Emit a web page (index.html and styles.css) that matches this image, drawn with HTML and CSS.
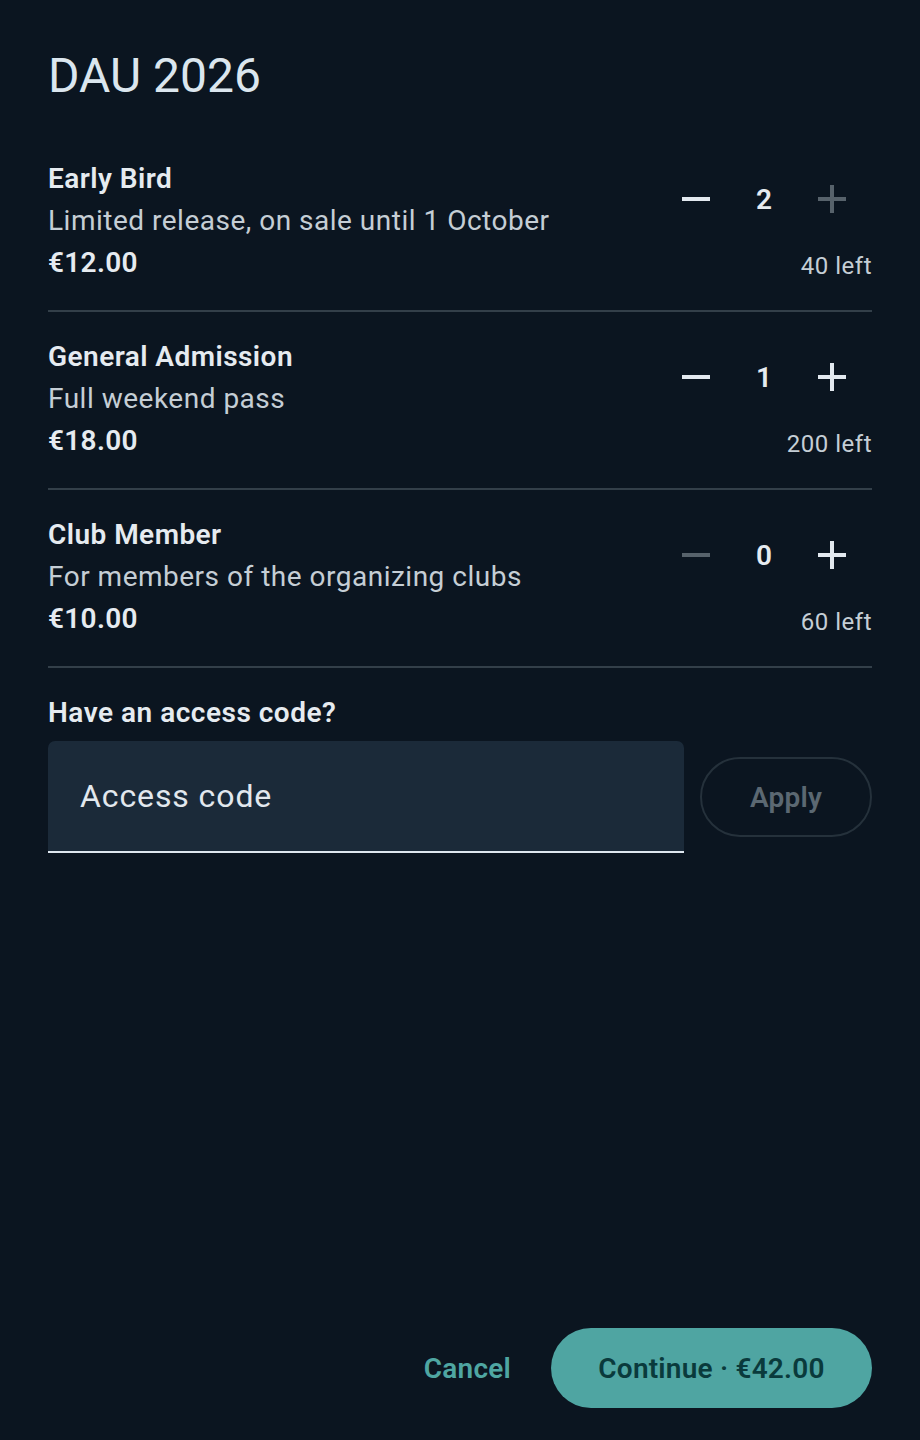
FILE: index.html
```html
<!DOCTYPE html>
<html lang="en">
<head>
<meta charset="utf-8">
<title>DAU 2026</title>
<link rel="stylesheet" href="styles.css">
</head>
<body>
<div class="dialog">
  <h1 class="title">DAU 2026</h1>

  <div class="tickets">
    <div class="ticket">
      <div class="info">
        <div class="name">Early Bird</div>
        <div class="desc">Limited release, on sale until 1 October</div>
        <div class="price">€12.00</div>
      </div>
      <div class="qty">
        <div class="stepper">
          <button class="step"><svg viewBox="0 0 30 30" width="30" height="30"><rect x="1" y="13" width="28" height="4" fill="currentColor"/></svg></button>
          <span class="count">2</span>
          <button class="step disabled"><svg viewBox="0 0 30 30" width="30" height="30"><rect x="1" y="13" width="28" height="4" fill="currentColor"/><rect x="13" y="1" width="4" height="28" fill="currentColor"/></svg></button>
        </div>
        <div class="left">40 left</div>
      </div>
    </div>

    <div class="ticket">
      <div class="info">
        <div class="name">General Admission</div>
        <div class="desc">Full weekend pass</div>
        <div class="price">€18.00</div>
      </div>
      <div class="qty">
        <div class="stepper">
          <button class="step"><svg viewBox="0 0 30 30" width="30" height="30"><rect x="1" y="13" width="28" height="4" fill="currentColor"/></svg></button>
          <span class="count">1</span>
          <button class="step"><svg viewBox="0 0 30 30" width="30" height="30"><rect x="1" y="13" width="28" height="4" fill="currentColor"/><rect x="13" y="1" width="4" height="28" fill="currentColor"/></svg></button>
        </div>
        <div class="left">200 left</div>
      </div>
    </div>

    <div class="ticket">
      <div class="info">
        <div class="name">Club Member</div>
        <div class="desc">For members of the organizing clubs</div>
        <div class="price">€10.00</div>
      </div>
      <div class="qty">
        <div class="stepper">
          <button class="step disabled"><svg viewBox="0 0 30 30" width="30" height="30"><rect x="1" y="13" width="28" height="4" fill="currentColor"/></svg></button>
          <span class="count">0</span>
          <button class="step"><svg viewBox="0 0 30 30" width="30" height="30"><rect x="1" y="13" width="28" height="4" fill="currentColor"/><rect x="13" y="1" width="4" height="28" fill="currentColor"/></svg></button>
        </div>
        <div class="left">60 left</div>
      </div>
    </div>
  </div>

  <div class="code">
    <div class="code-label">Have an access code?</div>
    <div class="code-row">
      <div class="field"><span class="placeholder">Access code</span></div>
      <button class="apply">Apply</button>
    </div>
  </div>

  <div class="spacer"></div>

  <div class="actions">
    <button class="cancel">Cancel</button>
    <button class="continue">Continue · €42.00</button>
  </div>
</div>
</body>
</html>
```

FILE: styles.css
```css
* { box-sizing: border-box; }
html, body {
  margin: 0;
  padding: 0;
  background: #0b1520;
}
body {
  font-family: Roboto, "Noto Sans", sans-serif;
  color: #e2e8ee;
}
button {
  font-family: inherit;
  border: none;
  background: none;
  padding: 0;
  margin: 0;
  cursor: pointer;
}
.dialog {
  width: 920px;
  height: 1440px;
  padding: 44px 48px 32px;
  display: flex;
  flex-direction: column;
}
.title {
  margin: 0;
  font-size: 48px;
  font-weight: 400;
  line-height: 64px;
  color: #dbe6ee;
}
.tickets {
  margin-top: 26px;
}
.ticket {
  display: flex;
  justify-content: space-between;
  padding: 24px 0 26px;
  border-bottom: 2px solid #333f49;
}
.info {
  display: flex;
  flex-direction: column;
}
.name {
  font-size: 28px;
  font-weight: 600;
  line-height: 42px;
  letter-spacing: 0.45px;
  color: #e6ebf0;
}
.desc {
  font-size: 28px;
  font-weight: 400;
  line-height: 42px;
  letter-spacing: 0.5px;
  color: #c5ced5;
}
.price {
  font-size: 28px;
  font-weight: 600;
  line-height: 42px;
  letter-spacing: 0.3px;
  color: #e6ebf0;
}
.qty {
  display: flex;
  flex-direction: column;
  align-items: flex-end;
}
.stepper {
  display: flex;
  align-items: center;
  height: 82px;
}
.step {
  width: 68px;
  height: 68px;
  display: flex;
  align-items: center;
  justify-content: center;
  color: #e3e9ef;
}
.step.disabled {
  color: #57626b;
}
.count {
  width: 68px;
  text-align: center;
  font-size: 28px;
  font-weight: 600;
  color: #e6ebf0;
}
.stepper .step:last-child {
  margin-right: 6px;
}
.left {
  margin-top: 10px;
  font-size: 24px;
  line-height: 32px;
  letter-spacing: 0.5px;
  color: #c5ced5;
}
.code {
  padding-top: 24px;
}
.code-label {
  font-size: 28px;
  font-weight: 600;
  line-height: 42px;
  letter-spacing: 0.5px;
  color: #e6ebf0;
}
.code-row {
  margin-top: 7px;
  display: flex;
  align-items: center;
  gap: 16px;
}
.field {
  width: 636px;
  height: 112px;
  background: #1b2a39;
  border-radius: 7px 7px 0 0;
  border-bottom: 2px solid #dfe7ef;
  display: flex;
  align-items: center;
  padding-left: 32px;
}
.placeholder {
  font-size: 32px;
  letter-spacing: 0.9px;
  color: #e2e8ee;
}
.apply {
  width: 172px;
  height: 80px;
  border: 2px solid #25313b;
  border-radius: 40px;
  font-size: 28px;
  font-weight: 600;
  letter-spacing: 0.2px;
  color: #5b6872;
}
.spacer {
  flex: 1;
}
.actions {
  display: flex;
  justify-content: flex-end;
  align-items: center;
  gap: 16px;
}
.cancel {
  height: 80px;
  padding: 0 24px;
  font-size: 28px;
  font-weight: 600;
  letter-spacing: 0.2px;
  color: #4fa6a2;
}
.continue {
  height: 80px;
  width: 321px;
  border-radius: 40px;
  background: #4fa5a2;
  font-size: 28px;
  font-weight: 600;
  letter-spacing: 0.2px;
  color: #0a3a3c;
}
```
